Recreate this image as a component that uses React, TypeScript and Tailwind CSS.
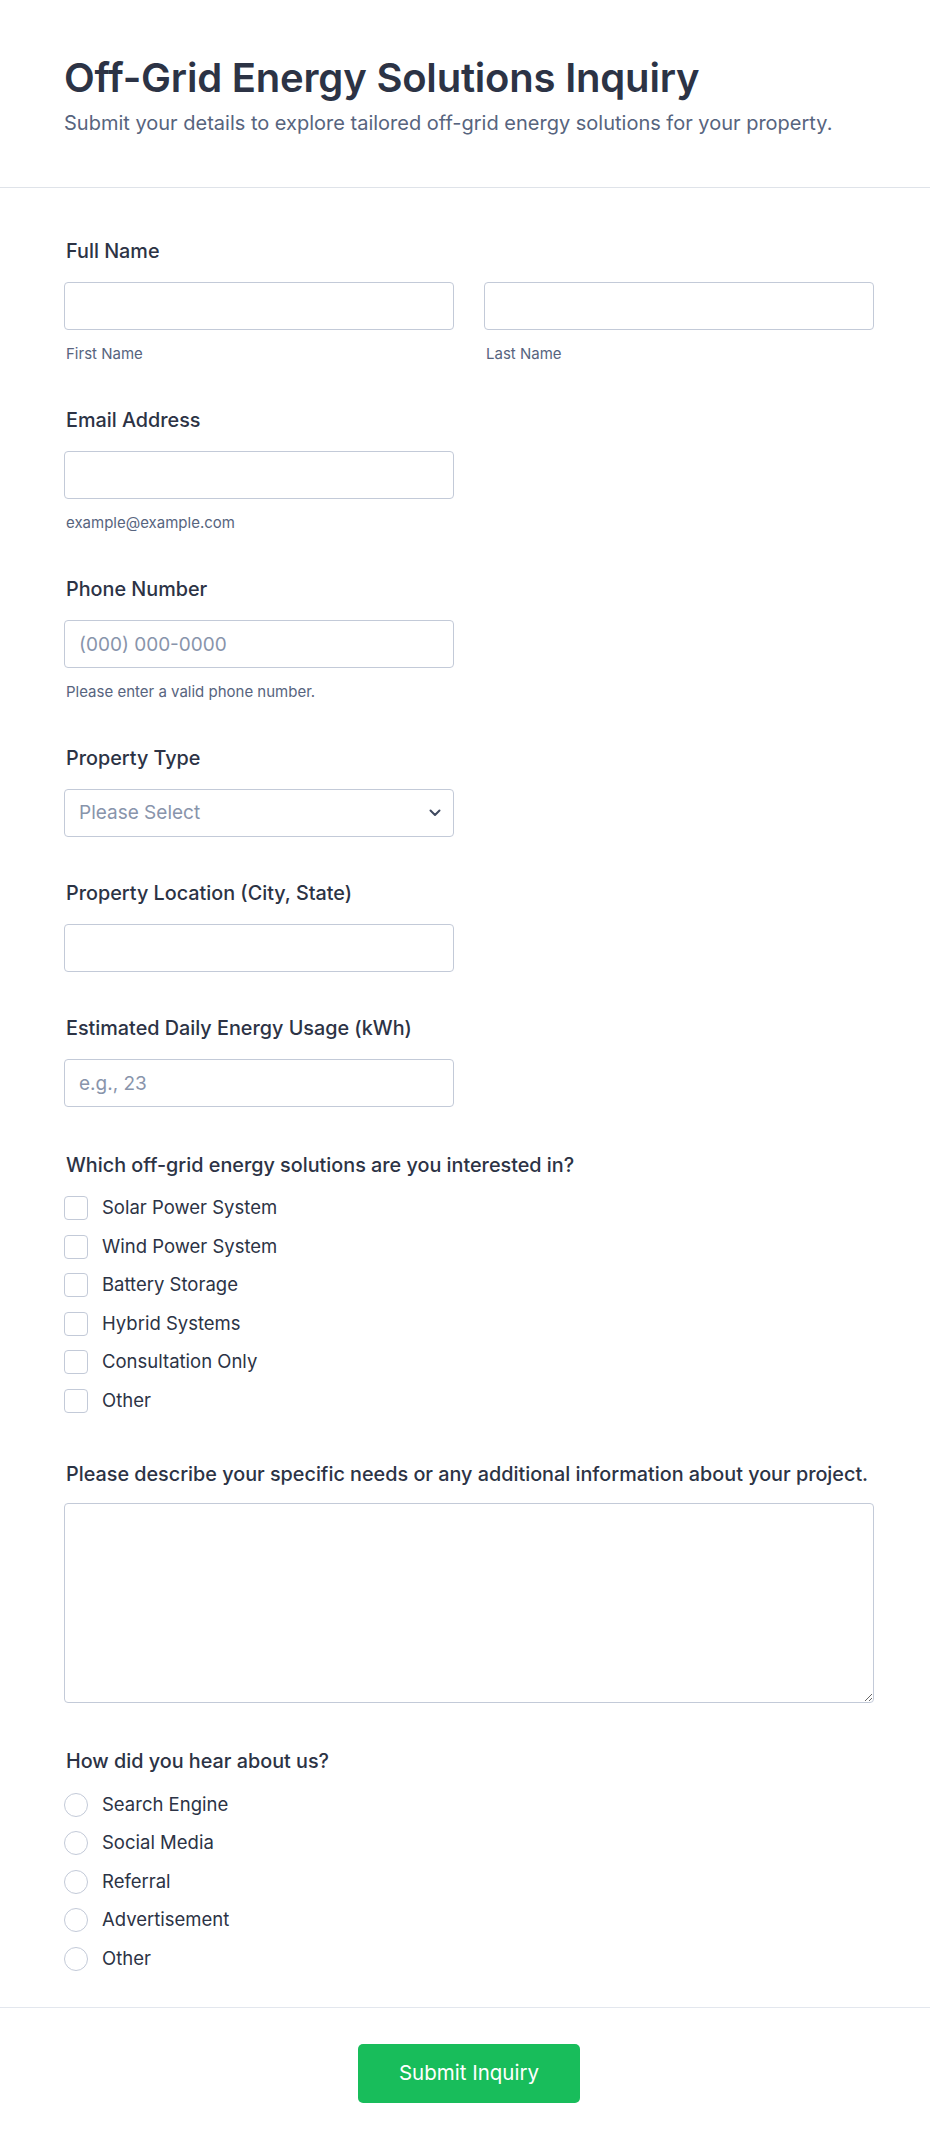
import React from "react";

const inputClass =
  "h-12 w-full rounded-[4px] border border-[#c3cad8] bg-white px-[14px] text-[19px] text-[#2c3345] placeholder:text-[#8894ab] outline-none";

function Label({ children }: { children: React.ReactNode }) {
  return <div className="mb-[19px] text-[19.8px] font-medium leading-6 text-[#2c3345]">{children}</div>;
}

function Sub({ children }: { children: React.ReactNode }) {
  return <div className="mt-[14px] px-[2px] text-[15px] leading-5 text-[#57647e]">{children}</div>;
}

const solutions = [
  "Solar Power System",
  "Wind Power System",
  "Battery Storage",
  "Hybrid Systems",
  "Consultation Only",
  "Other",
];

const sources = ["Search Engine", "Social Media", "Referral", "Advertisement", "Other"];

export default function App() {
  return (
    <div className="min-h-screen bg-white font-['Inter',sans-serif] text-[#2c3345]">
      {/* Header */}
      <header className="border-b border-[#dfe3e9] pl-16 pr-14 pt-[54px] pb-[50px]">
        <h1 className="text-[40px] font-semibold leading-[48px] tracking-[-0.2px] text-[#2c3345]">
          Off-Grid Energy Solutions Inquiry
        </h1>
        <p className="mt-[7px] text-[20px] leading-7 text-[#57647e]">
          Submit your details to explore tailored off-grid energy solutions for your property.
        </p>
      </header>

      <form className="flex flex-col gap-[44px] pl-16 pr-14 pt-[51px] pb-[36px]">
        {/* Full Name */}
        <div>
          <div className="px-[2px]">
            <Label>Full Name</Label>
          </div>
          <div className="grid grid-cols-2 gap-[30px]">
            <div>
              <input className={inputClass} />
              <Sub>First Name</Sub>
            </div>
            <div>
              <input className={inputClass} />
              <Sub>Last Name</Sub>
            </div>
          </div>
        </div>

        {/* Email */}
        <div className="w-[390px]">
          <div className="px-[2px]">
            <Label>Email Address</Label>
          </div>
          <input className={inputClass} />
          <Sub>example@example.com</Sub>
        </div>

        {/* Phone */}
        <div className="w-[390px]">
          <div className="px-[2px]">
            <Label>Phone Number</Label>
          </div>
          <input className={inputClass} placeholder="(000) 000-0000" />
          <Sub>Please enter a valid phone number.</Sub>
        </div>

        {/* Property type */}
        <div className="w-[390px]">
          <div className="px-[2px]">
            <Label>Property Type</Label>
          </div>
          <div className="relative">
            <div className={inputClass + " flex items-center text-[#8894ab]"}>Please Select</div>
            <svg
              className="absolute right-[13px] top-1/2 -translate-y-1/2"
              width="12"
              height="8"
              viewBox="0 0 12 8"
              fill="none"
            >
              <path d="M1.5 1.5L6 6L10.5 1.5" stroke="#404a60" strokeWidth="2" strokeLinecap="round" strokeLinejoin="round" />
            </svg>
          </div>
        </div>

        {/* Location */}
        <div className="w-[390px]">
          <div className="px-[2px]">
            <Label>Property Location (City, State)</Label>
          </div>
          <input className={inputClass} />
        </div>

        {/* Usage */}
        <div className="w-[390px]">
          <div className="px-[2px]">
            <Label>Estimated Daily Energy Usage (kWh)</Label>
          </div>
          <input className={inputClass} placeholder="e.g., 23" />
        </div>

        {/* Solutions */}
        <div className="mt-[2px]">
          <div className="px-[2px]">
            <Label>Which off-grid energy solutions are you interested in?</Label>
          </div>
          <div className="flex flex-col gap-[14.5px]">
            {solutions.map((s) => (
              <label key={s} className="flex h-6 items-center gap-[14px]">
                <span className="h-6 w-6 shrink-0 rounded-[4px] border border-[#c3cad8] bg-white" />
                <span className="text-[18.5px] text-[#2c3345]">{s}</span>
              </label>
            ))}
          </div>
        </div>

        {/* Description */}
        <div className="mt-[5px]">
          <div className="px-[2px]">
            <div className="mb-[17px] whitespace-nowrap text-[19.8px] font-medium leading-6 text-[#2c3345]">
              Please describe your specific needs or any additional information about your project.
            </div>
          </div>
          <textarea className="block h-[200px] w-full rounded-[4px] border border-[#c3cad8] bg-white px-[14px] py-[10px] text-[19px] outline-none" />
        </div>

        {/* Heard about */}
        <div className="mt-[2px]">
          <div className="px-[2px]">
            <div className="mb-[20px] text-[19.8px] font-medium leading-6 text-[#2c3345]">How did you hear about us?</div>
          </div>
          <div className="flex flex-col gap-[14.5px]">
            {sources.map((s) => (
              <label key={s} className="flex h-6 items-center gap-[14px]">
                <span className="h-6 w-6 shrink-0 rounded-full border border-[#c3cad8] bg-white" />
                <span className="text-[18.5px] text-[#2c3345]">{s}</span>
              </label>
            ))}
          </div>
        </div>
      </form>

      {/* Footer */}
      <div className="flex justify-center border-t border-[#e3e7ee] pl-16 pr-14 pt-[36px] pb-[50px]">
        <button
          type="button"
          className="h-[59px] w-[222px] rounded-[5px] bg-[#18bd5b] text-[20.5px] font-normal text-white"
        >
          Submit Inquiry
        </button>
      </div>
    </div>
  );
}
